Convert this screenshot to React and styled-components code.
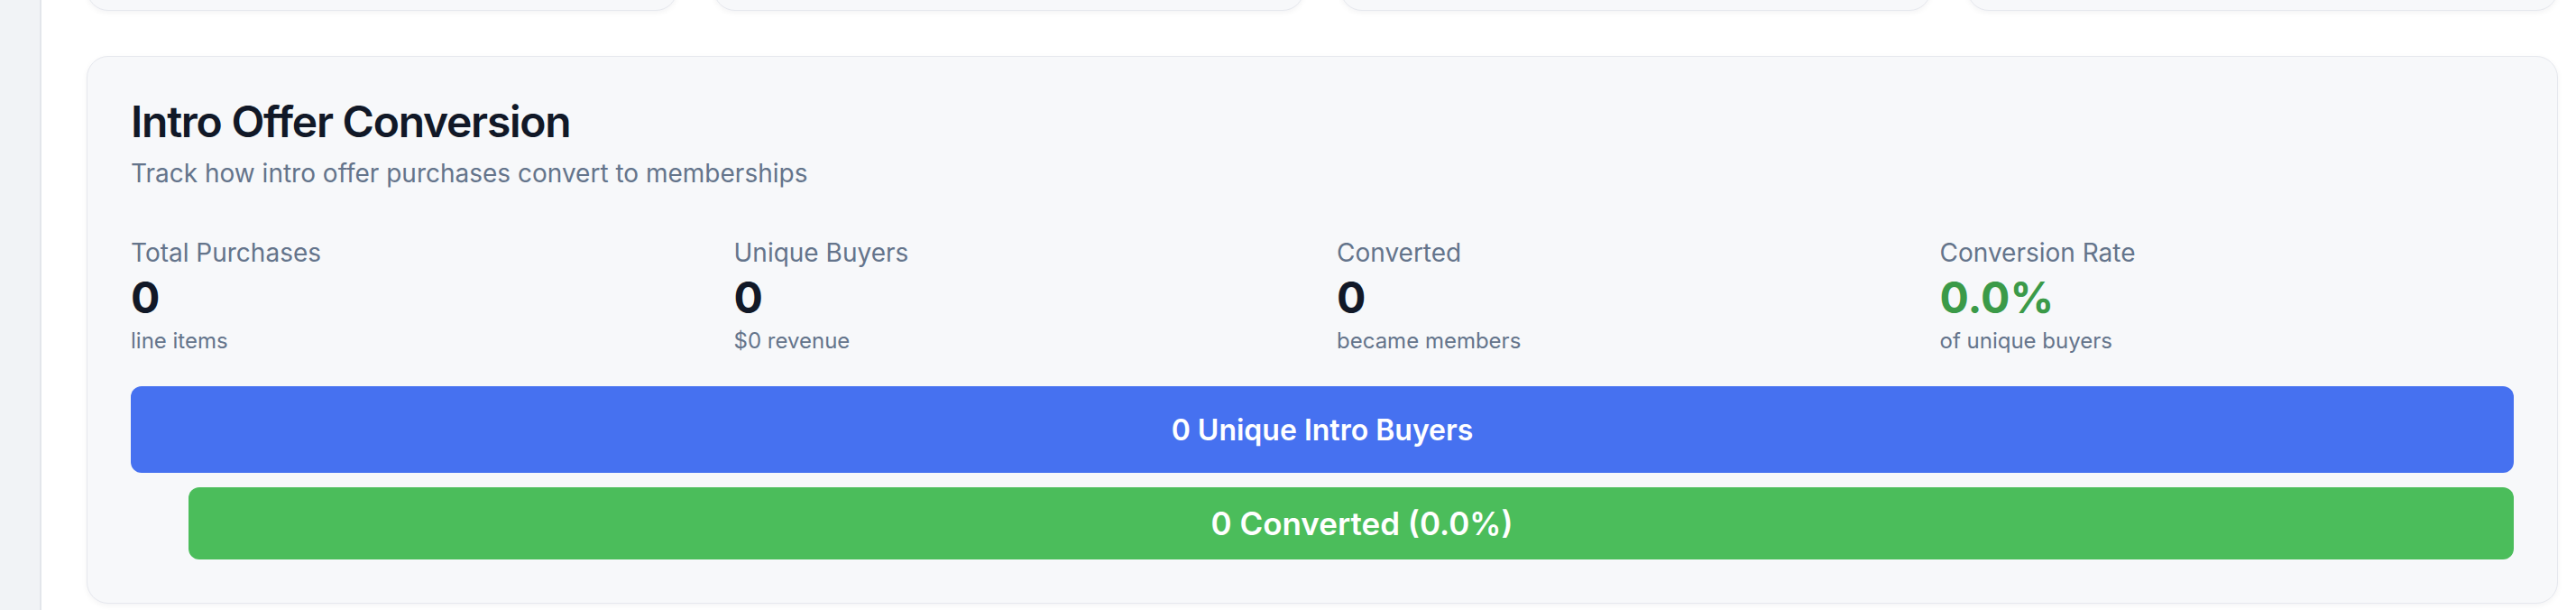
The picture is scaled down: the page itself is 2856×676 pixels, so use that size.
import styled, { createGlobalStyle } from "styled-components";

const GlobalStyle = createGlobalStyle`
  html, body {
    margin: 0;
    padding: 0;
    background: #ffffff;
    overflow: hidden;
  }
  body {
    font-family: Inter, "Noto Sans", "Liberation Sans", sans-serif;
    -webkit-font-smoothing: antialiased;
  }
`;

const stats = [
  { label: "Total Purchases", value: "0", sub: "line items" },
  { label: "Unique Buyers", value: "0", sub: "$0 revenue" },
  { label: "Converted", value: "0", sub: "became members" },
  { label: "Conversion Rate", value: "0.0%", sub: "of unique buyers", good: true },
];

function App() {
  return (
    <>
      <GlobalStyle />
      <Layout>
        <Sidebar />
        <Main>
          <Scrolled>
            <CardRow>
              <SummaryCard />
              <SummaryCard />
              <SummaryCard />
              <SummaryCard />
            </CardRow>
            <Panel>
              <Title>Intro Offer Conversion</Title>
              <Subtitle>Track how intro offer purchases convert to memberships</Subtitle>
              <StatGrid>
                {stats.map((s) => (
                  <Stat key={s.label}>
                    <StatLabel>{s.label}</StatLabel>
                    <StatValue $good={s.good}>{s.value}</StatValue>
                    <StatSub>{s.sub}</StatSub>
                  </Stat>
                ))}
              </StatGrid>
              <Funnel>
                <FunnelBar $color="#4671f0" $height={96} $size={32}>
                  0 Unique Intro Buyers
                </FunnelBar>
                <FunnelBar $color="#4bbd5b" $height={80} $size={35} $indent={64} $shift={24}>
                  0 Converted (0.0%)
                </FunnelBar>
              </Funnel>
            </Panel>
          </Scrolled>
        </Main>
      </Layout>
    </>
  );
}

export default App;

const Layout = styled.div`
  display: flex;
  height: 676px;
  overflow: hidden;
`;

const Sidebar = styled.aside`
  width: 44px;
  flex-shrink: 0;
  background: #f1f3f6;
  border-right: 2px solid #e3e6eb;
`;

const Main = styled.main`
  flex: 1;
  padding: 0 20px 0 50px;
  overflow: hidden;
`;

// page is scrolled: the summary cards above are mostly out of view
const Scrolled = styled.div`
  margin-top: -108px;
`;

const CardRow = styled.div`
  display: grid;
  grid-template-columns: repeat(4, 1fr);
  gap: 40px;
`;

const SummaryCard = styled.div`
  height: 118px;
  background: #f7f8fa;
  border: 1px solid #e6e8ee;
  border-radius: 24px;
  box-shadow: 0 2px 6px rgba(15, 23, 42, 0.05);
`;

const Panel = styled.section`
  margin-top: 50px;
  background: #f7f8fa;
  border: 1px solid #e6e8ee;
  border-radius: 24px;
  box-shadow: 0 2px 6px rgba(15, 23, 42, 0.05);
  padding: 48px;
`;

const Title = styled.h2`
  margin: 0;
  font-size: 48px;
  line-height: 48px;
  font-weight: 600;
  color: #111827;
  letter-spacing: -1.25px;
`;

const Subtitle = styled.p`
  margin: 13px 0 0;
  font-size: 28px;
  line-height: 40px;
  color: #64748b;
`;

const StatGrid = styled.div`
  display: grid;
  grid-template-columns: repeat(4, 1fr);
  gap: 32px;
  margin-top: 48px;
`;

const Stat = styled.div`
  display: flex;
  flex-direction: column;
`;

const StatLabel = styled.span`
  font-size: 28px;
  line-height: 40px;
  color: #64748b;
`;

const StatValue = styled.span`
  font-size: 48px;
  line-height: 60px;
  font-weight: 700;
  color: ${(p) => (p.$good ? "#3b9a48" : "#111827")};
`;

const StatSub = styled.span`
  margin-top: 2px;
  font-size: 24px;
  line-height: 32px;
  color: #64748b;
`;

const Funnel = styled.div`
  display: flex;
  flex-direction: column;
  gap: 16px;
  margin-top: 34px;
`;

const FunnelBar = styled.div`
  display: flex;
  align-items: center;
  justify-content: center;
  height: ${(p) => p.$height}px;
  margin-left: ${(p) => p.$indent || 0}px;
  padding-left: ${(p) => p.$shift || 0}px;
  background: ${(p) => p.$color};
  border-radius: 12px;
  color: #ffffff;
  font-size: ${(p) => p.$size}px;
  font-weight: 600;
`;
